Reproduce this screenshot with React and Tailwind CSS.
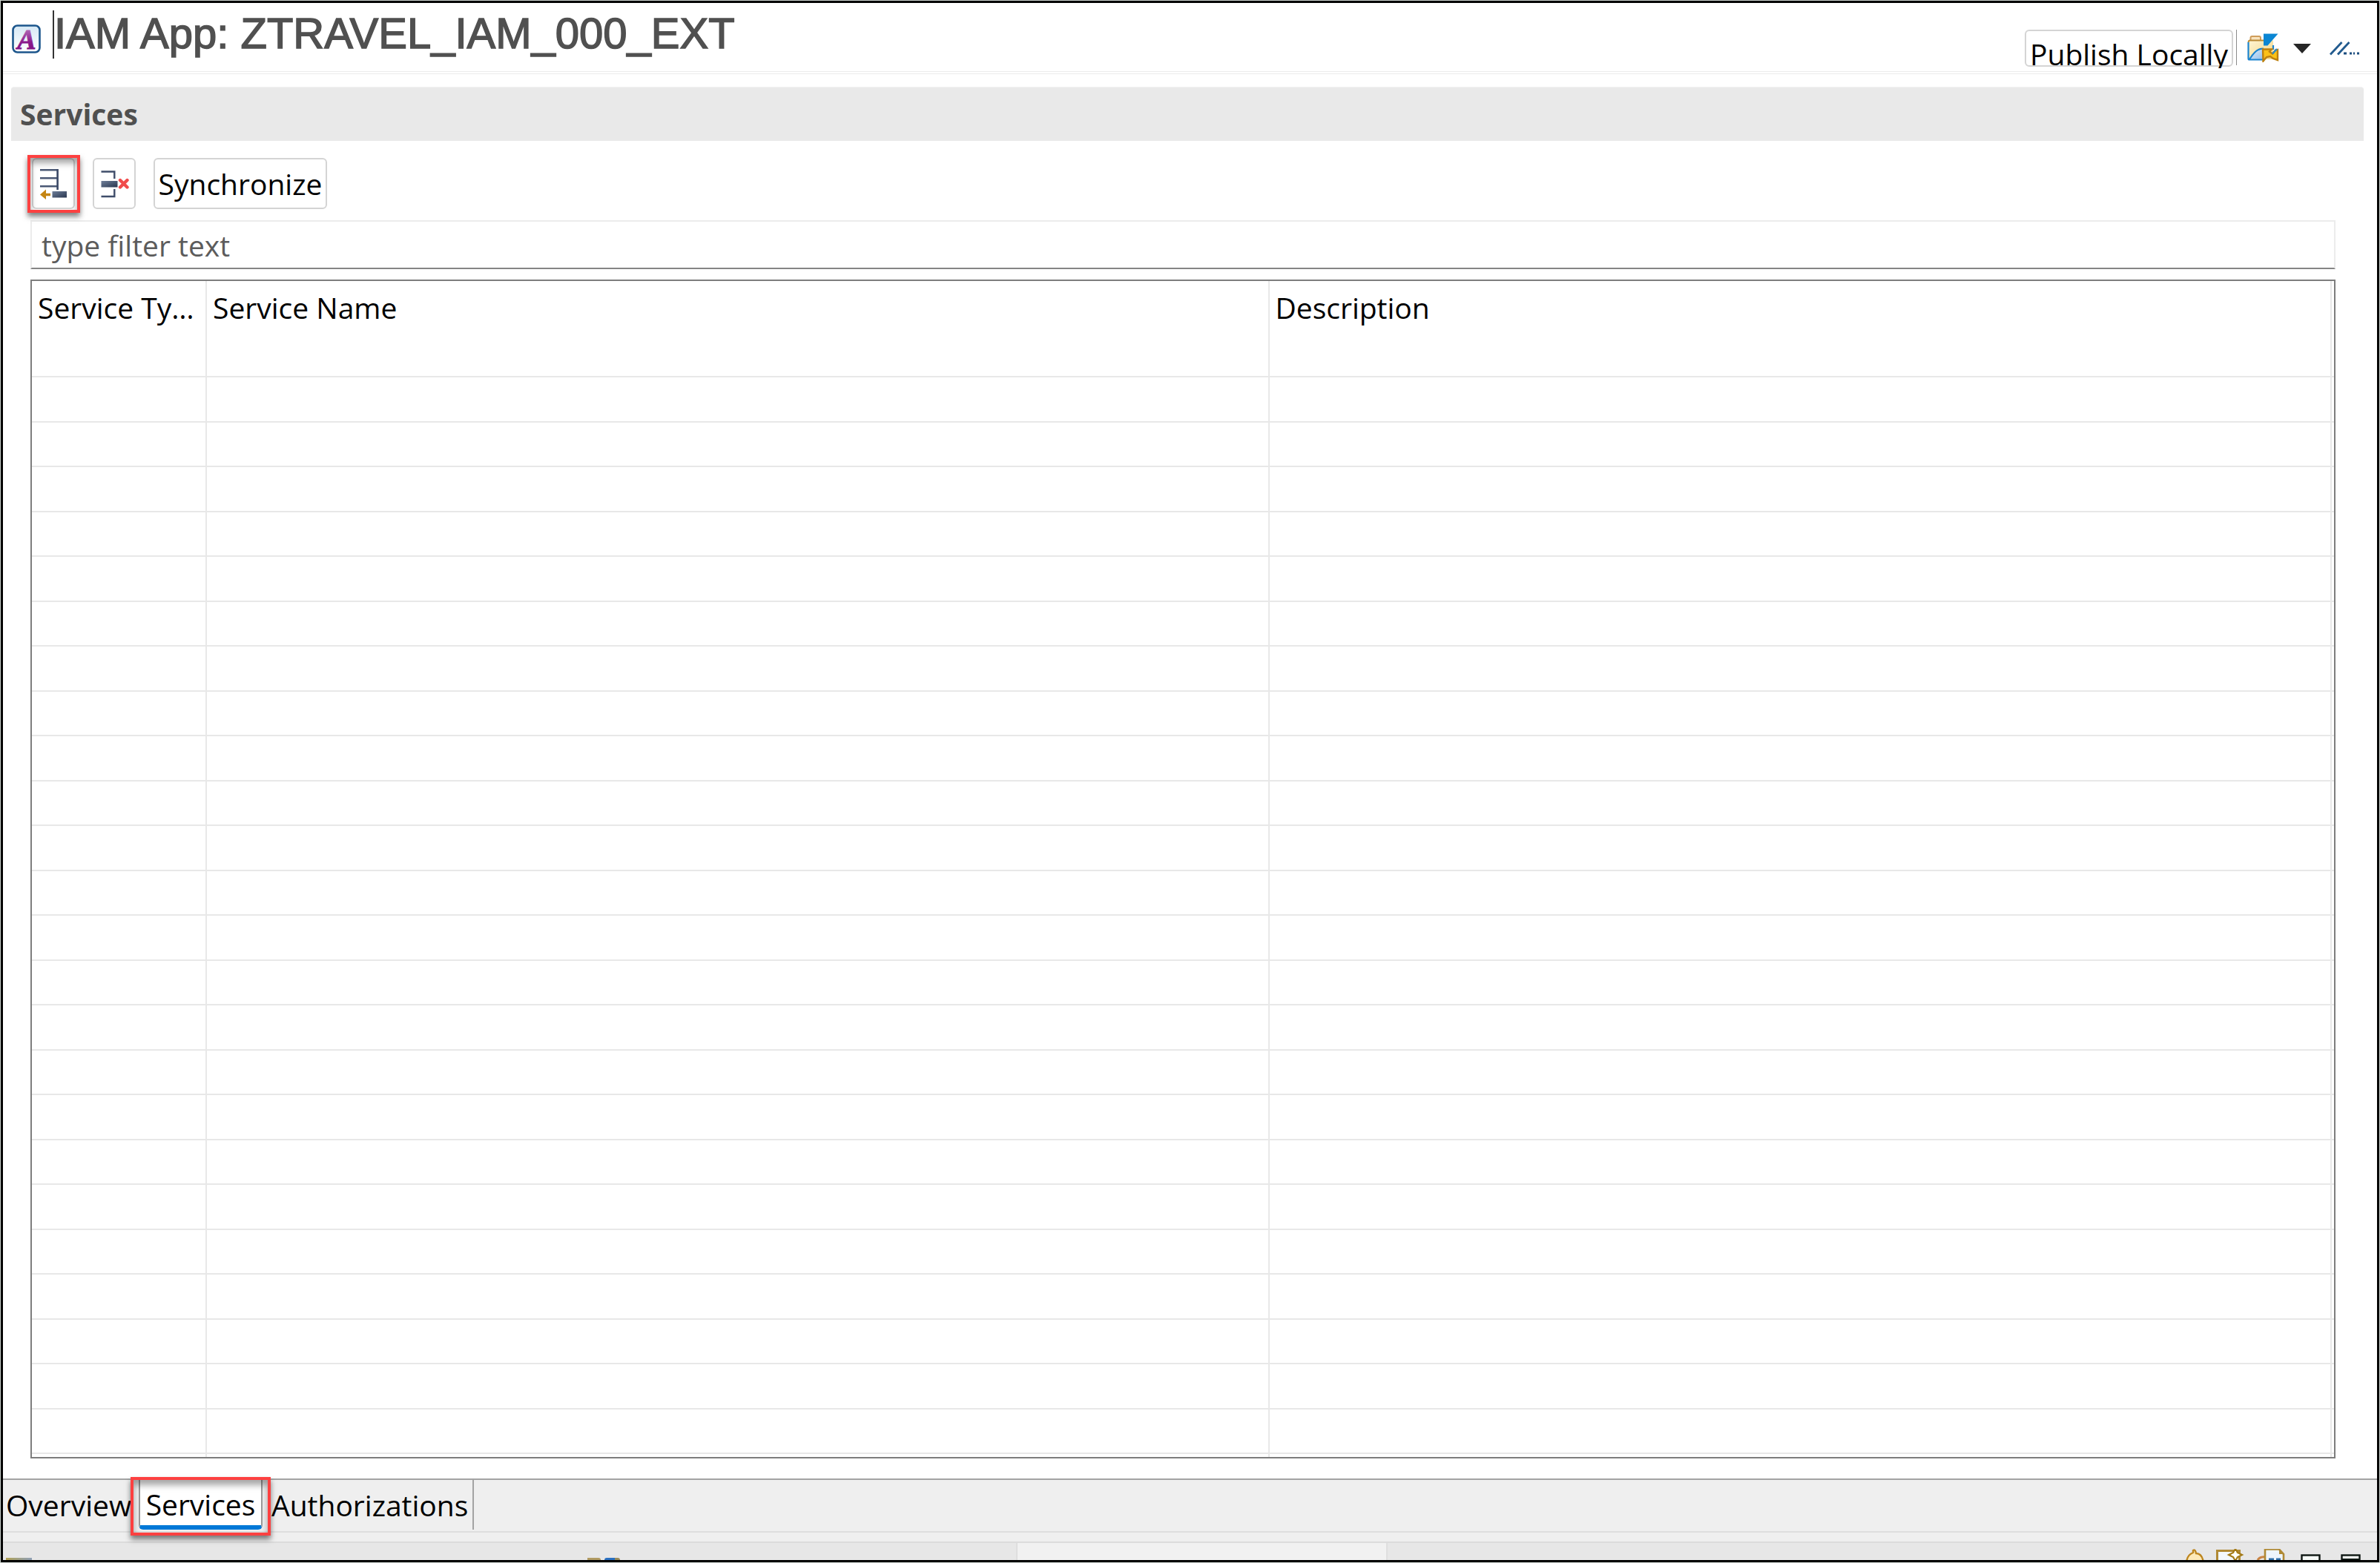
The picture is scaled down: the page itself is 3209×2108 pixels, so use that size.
import React from 'react';

function AppIcon() {
  return (
    <svg className="mt-[29px] size-[40px] shrink-0" viewBox="0 0 40 40" aria-hidden="true">
      <defs>
        <linearGradient id="tile" x1="0" y1="0" x2="0" y2="1">
          <stop offset="0" stopColor="#d5e8f5" />
          <stop offset="1" stopColor="#ffffff" />
        </linearGradient>
        <linearGradient id="letter" x1="0" y1="0" x2="0" y2="1">
          <stop offset="0" stopColor="#c48fcb" />
          <stop offset="0.6" stopColor="#8a1a8c" />
          <stop offset="1" stopColor="#7d0a80" />
        </linearGradient>
      </defs>
      <rect x="1.5" y="1.5" width="36" height="36" rx="6" fill="url(#tile)" stroke="#1c568c" strokeWidth="2.6" />
      <text x="20" y="32.5" textAnchor="middle" fill="url(#letter)" stroke="url(#letter)" strokeWidth="0.8" className="font-['Liberation_Serif',serif] text-[38px] font-bold italic">A</text>
    </svg>
  );
}

function InsertIcon() {
  return (
    <svg className="h-[42px] w-[38px]" viewBox="0 0 38 42" aria-hidden="true">
      <defs>
        <linearGradient id="slate" x1="0" y1="0" x2="1" y2="1">
          <stop offset="0" stopColor="#6f7f99" />
          <stop offset="1" stopColor="#29364f" />
        </linearGradient>
      </defs>
      <path d="M1 2.3H24.5M1 13.3H24M1 24.3H24" stroke="#4a5874" strokeWidth="2.4" />
      <path d="M24.6 1V29" stroke="#3a4866" strokeWidth="2.6" />
      <rect x="17.5" y="31" width="19.500" height="8.5" fill="url(#slate)" />
      <path d="M1 35.500L9 28.500V33.800H15V37.200H9V42Z" fill="#c58512" />
    </svg>
  );
}

function RemoveIcon() {
  return (
    <svg className="ml-[2px] h-[38px] w-[38px]" viewBox="0 0 38 38" aria-hidden="true">
      <path d="M0.5 2.5H18.3V12M0.5 36H18.3V26" fill="none" stroke="#3f4d6a" strokeWidth="2.4" />
      <rect x="0.5" y="15" width="22" height="8.5" fill="url(#slate)" />
      <path d="M26 14L35.5 23.5M35.5 14L26 23.5" stroke="#f04c4c" strokeWidth="4.4" strokeLinecap="round" />
    </svg>
  );
}

function FolderIcon() {
  return (
    <svg className="h-[39px] w-[43px]" viewBox="0 0 43 39" aria-hidden="true">
      <defs>
        <linearGradient id="folder" x1="0" y1="0" x2="1" y2="1">
          <stop offset="0" stopColor="#fff6d6" />
          <stop offset="1" stopColor="#f2d482" />
        </linearGradient>
        <linearGradient id="flap" x1="0" y1="0" x2="1" y2="1">
          <stop offset="0" stopColor="#e5f1fc" />
          <stop offset="1" stopColor="#8dbdea" />
        </linearGradient>
      </defs>
      <path d="M4.5 10V6Q4.5 4 6.5 4H16Q18 4 18 6V10" fill="#f8e3bd" stroke="#cf9c5a" strokeWidth="2" />
      <path d="M1.500 35V11Q2 9.500 3.500 9.500H35V35Z" fill="url(#folder)" />
      <path d="M1.500 12Q2 9.500 3.500 9.500H22" fill="none" stroke="#b98a35" strokeWidth="2" />
      <path d="M3 35Q10 24 15 22Q18 20.500 22 20.500V35.500Z" fill="url(#flap)" />
      <path d="M35 16V22M1.500 12V34Q1.500 35.500 3 35.500H21M3 35Q10 24 15 22Q18 20.500 22 20.500" fill="none" stroke="#1b84cf" strokeWidth="2.200" />
      <path d="M22 0.500H41.500L27.500 16.500H22Z" fill="#0b86d3" />
      <path d="M21 21.500H33L30 24.500L34 27.500L38 22.500L41 22V36L35 34L31 31L26 32L21.500 37.500Z" fill="#fbc117" stroke="#bd800f" strokeWidth="2.400" />
      <path d="M34 27.500L40 21" stroke="#2a8cc9" strokeWidth="2.400" />
    </svg>
  );
}

function LinkMoreIcon() {
  return (
    <svg className="h-[19px] w-[42px]" viewBox="0 0 42 19" aria-hidden="true">
      <path d="M1 17.500L16.500 1M11 17.500L26.500 1" stroke="#215a8e" strokeWidth="2.800" />
      <path d="M19 16H23M27 16H30M32 16H34M37 16H40" stroke="#1d4e80" strokeWidth="2.800" />
    </svg>
  );
}

function StatusIcons() {
  return (
    <svg className="h-[15px] w-[240px]" viewBox="0 0 240 15" aria-hidden="true">
      <path d="M1 18Q2 8 10 5V2Q13 0 14 6Q22 6 24 18Z" fill="#fde9b8" stroke="#bd861f" strokeWidth="2.400" />
      <rect x="42.500" y="2.500" width="30" height="20" fill="#f3f8fd" stroke="#b08a35" strokeWidth="3" />
      <path d="M67 0L70 5L76 8L70 11L67 16L64 11L58 8L64 5Z" fill="#fffbe2" stroke="#a37a17" strokeWidth="2.200" />
      <path d="M67 3V13M62 8H72" stroke="#ffffff" strokeWidth="2" />
      <path d="M97 15Q100 10 108 11" fill="none" stroke="#c98544" strokeWidth="3" />
      <path d="M107 18V0.500H126L132 7V18Z" fill="#eef5fc" stroke="#b08a35" strokeWidth="2.600" />
      <path d="M126 0V7H133Z" fill="#b08a35" />
      <path d="M112 14H119M122 14H128" stroke="#2f6ea8" strokeWidth="3" />
      <rect x="156.500" y="8.500" width="24" height="10" fill="#f6faf7" stroke="#0f1713" strokeWidth="2.400" />
      <rect x="210.500" y="8.500" width="24" height="10" fill="#f6faf7" stroke="#0f1713" strokeWidth="2.400" />
      <path d="M210 14H235" stroke="#0f1713" strokeWidth="2" />
    </svg>
  );
}

function Highlight({ className }) {
  return (
    <span
      className={`pointer-events-none absolute z-10 border-4 border-[#fd4040] shadow-[0_5px_7px_rgba(0,0,0,0.5),inset_0_7px_8px_rgba(0,0,0,0.35)] ${className}`}
    />
  );
}

const toolButton =
  'flex h-[69px] items-center justify-center rounded-md border-2 border-[#d4d4d4] bg-white text-black';

const rows = Array.from({ length: 24 }, (_, i) => i);

export default function App() {
  return (
    <div className="flex min-h-screen flex-col bg-[#cdd3cf] p-px font-['Open_Sans','Noto_Sans',sans-serif] text-[39px] leading-[52px] text-black">
      <div className="flex flex-1 flex-col overflow-hidden border-[3px] border-black bg-white">
        <header className="flex h-[96px] items-start justify-between border-b-4 border-double border-[#ececec] pr-[22px] pl-3">
          <div className="flex">
            <AppIcon />
            <h1 className="mt-[10px] ml-[15px] h-[65px] border-l-2 border-[#333] font-['Liberation_Sans',sans-serif] text-[58px] leading-[61px] whitespace-nowrap text-[#505050] [-webkit-text-stroke:1.5px_#505050]">
              IAM App: ZTRAVEL_IAM_000_EXT
            </h1>
          </div>
          <div className="mt-9 flex items-start">
            <div className="h-[52px] overflow-hidden">
              <button type="button" className="flex h-[50px] w-[281px] items-start justify-center rounded-md border-2 border-[#d4d4d4] bg-white pt-[5px] whitespace-nowrap">
                Publish Locally
              </button>
            </div>
            <span className="ml-1 h-[48px] w-px bg-[#8c8c8c]" />
            <button type="button" aria-label="Open project" className="mt-[5px] ml-[14px]">
              <FolderIcon />
            </button>
            <button type="button" aria-label="More projects" className="mt-[19px] ml-[19px]">
              <svg className="h-[13px] w-[24px]" viewBox="0 0 24 13" aria-hidden="true">
                <path d="M0 0H24L12 13Z" fill="#262626" />
              </svg>
            </button>
            <button type="button" aria-label="More links" className="mt-4 ml-[25px]">
              <LinkMoreIcon />
            </button>
          </div>
        </header>

        <main className="flex flex-col pt-[17px]">
          <h2 className="mr-[18px] ml-[11px] rounded-t-sm border-t border-[#f2f2f2] bg-[#e9e9e9] py-[10px] pl-3 font-bold text-[#505050]">
            Services
          </h2>

          <div className="mr-[56px] ml-[37px] flex flex-col">
            <div className="mt-[23px] flex pl-[2px]">
              <div className="relative">
                <button type="button" aria-label="Insert service" className={`${toolButton} w-[58px]`}>
                  <InsertIcon />
                </button>
                <Highlight className="-top-1 -right-[7px] -bottom-[5px] -left-[6px]" />
              </div>
              <button type="button" aria-label="Remove service" className={`${toolButton} ml-6 w-[58px]`}>
                <RemoveIcon />
              </button>
              <button type="button" className={`${toolButton} ml-6 w-[234px]`}>
                Synchronize
              </button>
            </div>

            <input
              type="text"
              aria-label="Filter services"
              placeholder="type filter text"
              className="mt-[15px] h-[66px] w-full border-2 border-[#ececec] border-b-[#858585] bg-white pl-[13px] placeholder:text-[#5c5c5c]"
            />

            <div className="mt-[14px] border-2 border-[#7d7d7d]">
              <table className="w-full table-fixed border-separate border-spacing-0">
                <colgroup>
                  <col className="w-[236px]" />
                  <col />
                  <col />
                  <col className="w-[3px]" />
                </colgroup>
                <thead>
                  <tr className="h-[130px] text-left align-top">
                    {['Service Type', 'Service Name', 'Description'].map((label) => (
                      <th key={label} scope="col" className="truncate border-r-2 border-b-2 border-[#e8e8e8] p-0 pt-[10px] pr-2 pl-2 font-normal">
                        {label}
                      </th>
                    ))}
                    <td className="border-b-2 border-[#e8e8e8] p-0" />
                  </tr>
                </thead>
                <tbody>
                  {rows.map((row) => (
                    <tr key={row} className="h-[60px] odd:h-[61px]">
                      <td className="border-r-2 border-b-2 border-[#e8e8e8] p-0" />
                      <td className="border-r-2 border-b-2 border-[#e8e8e8] p-0" />
                      <td className="border-r-2 border-b-2 border-[#e8e8e8] p-0" />
                      <td className="border-b-2 border-[#e8e8e8] p-0" />
                    </tr>
                  ))}
                  <tr className="h-1">
                    <td className="border-r-2 border-[#e8e8e8] p-0" />
                    <td className="border-r-2 border-[#e8e8e8] p-0" />
                    <td className="border-r-2 border-[#e8e8e8] p-0" />
                    <td className="p-0" />
                  </tr>
                </tbody>
              </table>
            </div>
          </div>
        </main>

        <nav className="mt-[27px] flex h-[73px] items-start border-t-2 border-b-2 border-t-[#a3a3a3] border-b-[#dedede] bg-[#efefef]">
          <button type="button" className="h-[67px] w-[183px] pl-1 text-left">
            Overview
          </button>
          <div className="relative">
            <button type="button" aria-current="page" className="h-[67px] w-[167px] rounded-b-md border-x-2 border-b-[6px] border-x-[#9a9a9a] border-b-[#0078d7] bg-white pt-[5px]">
              Services
            </button>
            <Highlight className="-top-1 -right-[11px] -bottom-2 -left-[11px]" />
          </div>
          <button type="button" className="h-[67px] w-[285px] border-r-2 border-[#a3a3a3] pl-[12px] text-left">
            Authorizations
          </button>
        </nav>

        <footer className="flex flex-1 flex-col bg-[#efefef] pt-[12px]">
          <div className="flex flex-1 items-end border-t-2 border-[#dcdcdc] bg-[#e7e7e7]">
            <div className="flex grow basis-8 items-end self-stretch">
              <span className="ml-1 h-[3px] w-[35px] bg-linear-to-r from-[#b0a050] to-[#8f9fb5]" />
              <span className="ml-[749px] h-[3px] w-[18px] rounded-tr-sm bg-[#b09a62]" />
              <span className="ml-[5px] h-[3px] w-[14px] rounded-tl-sm bg-[#2a6fc0]" />
              <span className="h-[3px] w-[7px] rounded-tr-sm bg-[#9a8a5a]" />
            </div>
            <div className="w-[501px] self-stretch border-x-2 border-[#dedede] bg-[#f1f1f1]" />
            <div className="flex grow basis-0 justify-end">
              <StatusIcons />
              <span className="w-[18px]" />
            </div>
          </div>
        </footer>
      </div>
    </div>
  );
}
